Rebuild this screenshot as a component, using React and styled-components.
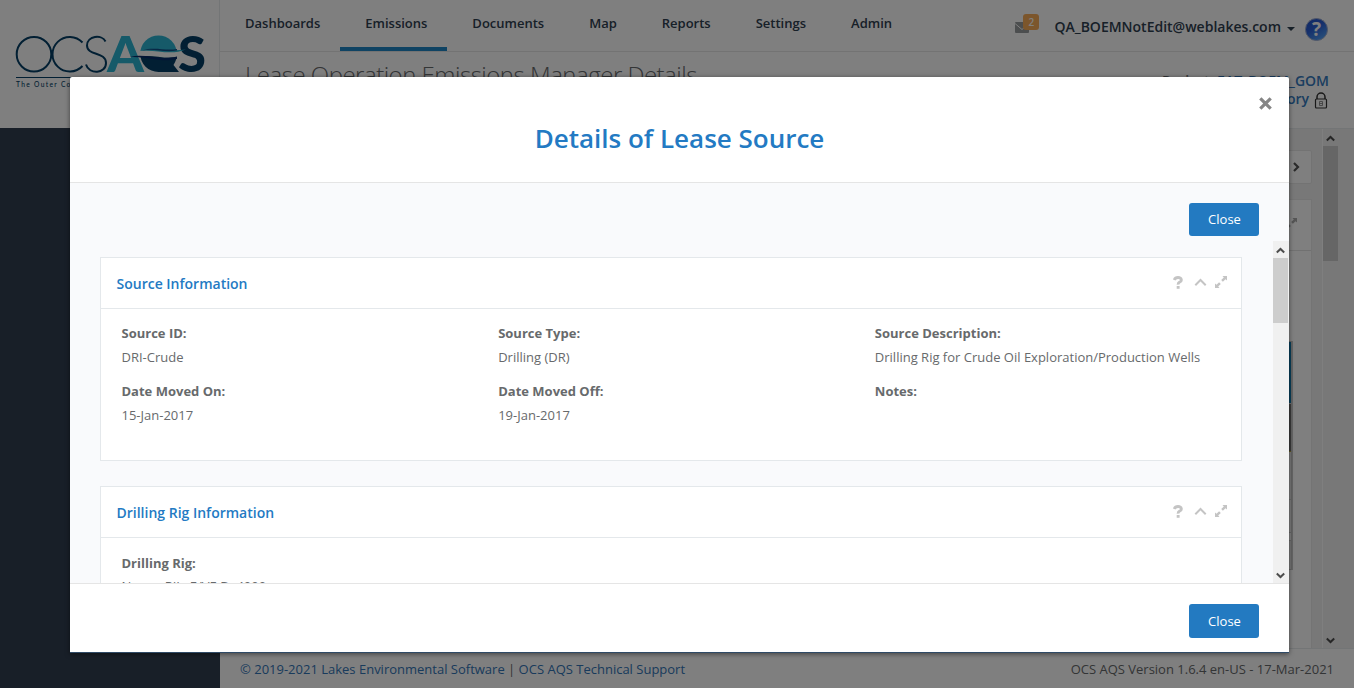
import React from 'react';
import styled, { createGlobalStyle } from 'styled-components';

const Global = createGlobalStyle`
  * { box-sizing: border-box; }
  html, body { margin: 0; padding: 0; overflow: hidden; }
  body { font-family: "Open Sans", "Noto Sans", sans-serif; font-size: 13px; color: #676a6c; }
`;

const Page = styled.div`
  width: 1354px;
  height: 688px;
  display: flex;
  background: #fff;
  overflow: hidden;
`;
const Sidebar = styled.aside`
  width: 220px;
  display: flex;
  flex-direction: column;
  background: #2f4050;
`;
const LogoBox = styled.div`
  height: 128px;
  padding: 33px 0 0 14px;
  background: #fff;
  border-right: 1px solid #e7eaec;
`;
const SideNav = styled.nav`
  flex: 1;
  background: #303f51;
`;
const Main = styled.div`
  flex: 1;
  min-width: 0;
  display: flex;
  flex-direction: column;
`;
const TopBar = styled.header`
  height: 52px;
  display: flex;
  justify-content: space-between;
  border-bottom: 1px solid #e7e7e7;
`;
const Menu = styled.nav`
  display: flex;
`;
const MenuItem = styled.a`
  height: 51px;
  padding: 13px 20px 0 25px;
  font-weight: 600;
  line-height: 20px;
  color: #2f4050;
  border-bottom: 4px solid ${p => (p.$active ? '#1f86c6' : 'transparent')};
`;
const UserArea = styled.div`
  display: flex;
  padding-right: 25px;
`;
const Mail = styled.div`
  display: flex;
  align-items: flex-start;
  padding-top: 14px;
  margin-right: 15px;
  svg { margin-top: 8px; }
`;
const Count = styled.span`
  width: 16px;
  height: 16px;
  margin-left: -6px;
  border-radius: 3px;
  background: #f8ac59;
  color: #fff;
  font-size: 10px;
  font-weight: 600;
  line-height: 17px;
  text-align: center;
  position: relative;
`;
const UserName = styled.span`
  padding-top: 17px;
  font-size: 14px;
  font-weight: 600;
  line-height: 20px;
  color: #2f4050;
`;
const Caret = styled.i`
  margin: 27px 10px 0 6px;
  height: 4px;
  border: 4px solid transparent;
  border-top-color: #2f4050;
  border-bottom: 0;
`;
const HelpIcon = styled.div`
  padding-top: 17px;
  height: 42px;
`;
const Heading = styled.div`
  height: 77px;
  display: flex;
  justify-content: space-between;
  padding: 0 25px;
  border-bottom: 1px solid #e7eaec;
`;
const PageTitle = styled.h2`
  margin: 7px 0 0;
  font-size: 24px;
  font-weight: 300;
  letter-spacing: -0.5px;
  line-height: 32px;
`;
const Project = styled.div`
  padding-top: 20px;
  font-size: 14px;
  font-weight: 600;
  line-height: 18px;
  text-align: right;
  a { color: #347ac0; }
`;
const ProjectLine = styled.div`
  display: flex;
  justify-content: flex-end;
  gap: 5px;
  padding-right: 1px;
  svg { margin-top: 2px; }
`;
const Content = styled.div`
  flex: 1;
  display: flex;
  background: #f1f1f1;
`;
const Panels = styled.div`
  flex: 1;
  padding: 21px 10px 0 25px;
  display: flex;
  flex-direction: column;
  gap: 15px;
`;
const PanelBar = styled.div`
  height: 34px;
  display: flex;
  align-items: center;
  justify-content: flex-end;
  padding: 0 11px 1px 0;
  background: #fff;
  border: 1px solid #e7e7e7;
  border-radius: 2px;
`;
const BackPanel = styled.div`
  flex: 1;
  background: #fff;
  border: 1px solid #e9e9e9;
  border-bottom: 0;
`;
const BackPanelHead = styled.div`
  height: 51px;
  display: flex;
  justify-content: flex-end;
  padding: 18px 14px 0 0;
  border-bottom: 1px solid #e2e2e2;
`;
const BackGrid = styled.div`
  margin: 90px 18px 0 20px;
  height: 229px;
  border: 1px solid #c8c8c8;
  border-right-width: 2px;
  display: flex;
  flex-direction: column;
`;
const BackRow = styled.div`
  height: ${p => p.$h}px;
  background: ${p => p.$bg};
  border-bottom: 1px solid ${p => p.$line};
`;
const Track = styled.div`
  width: ${p => p.$w}px;
  display: flex;
  flex-direction: column;
  align-items: flex-start;
  background: #f0f0f0;
  border-left: ${p => (p.$edge ? '1px solid #fff' : '0')};
`;
const Arrow = styled.div`
  width: 15px;
  height: 17px;
  padding-top: 1px;
  display: flex;
  align-items: center;
  justify-content: center;
`;
const Thumb = styled.div`
  width: 15px;
  height: ${p => p.$h}px;
  background: #cdcdcd;
`;
const Spacer = styled.div`
  flex: 1;
`;
const Footer = styled.footer`
  height: 40px;
  display: flex;
  justify-content: space-between;
  padding: 10px 20px 0 20px;
  border-top: 1px solid #e7eaec;
  background: #fff;
  line-height: 21px;
  a { color: #3376b8; }
`;
const Backdrop = styled.div`
  position: absolute;
  top: 0;
  left: 0;
  width: 1354px;
  height: 688px;
  padding: 77px 65px 0 70px;
  background: rgba(0, 0, 0, 0.5);
`;
const Dialog = styled.section`
  width: 1219px;
  height: 576px;
  display: flex;
  flex-direction: column;
  background: #fff;
  border-bottom: 1px solid #2f4a66;
  border-radius: 2px 2px 0 0;
  box-shadow: 0 1px 5px rgba(0, 0, 0, 0.5);
`;
const DialogHead = styled.div`
  height: 106px;
  display: grid;
  grid-template-columns: 1fr auto 1fr;
  border-bottom: 1px solid #e5e5e5;
`;
const DialogTitle = styled.h4`
  grid-column: 2;
  margin: 43px 0 0;
  font-size: 26px;
  font-weight: 600;
  line-height: 36px;
  color: #237ac3;
`;
const DismissButton = styled.button`
  justify-self: end;
  align-self: start;
  width: 13px;
  height: 13px;
  margin: 20px 17px 0 0;
  padding: 0;
  border: 0;
  background: none;
  display: flex;
`;
const DialogBody = styled.div`
  height: 400px;
  display: flex;
  flex-direction: column;
  background: #f9fafc;
`;
const Actions = styled.div`
  height: ${p => p.$h}px;
  padding: 20px 30px 0 0;
  display: flex;
  justify-content: flex-end;
  align-items: flex-start;
  border-top: ${p => (p.$line ? '1px solid #e5e5e5' : '0')};
`;
const Button = styled.button`
  width: 70px;
  height: ${p => p.$h}px;
  padding: 0 0 ${p => 34 - p.$h}px 1px;
  border: 0;
  border-radius: 3px;
  background: #237ac1;
  color: #fff;
  font: 13px "Open Sans", sans-serif;
`;
const ScrollPane = styled.div`
  height: 342px;
  display: flex;
  overflow: hidden;
`;
const Cards = styled.div`
  flex: 1;
  padding: 16px 31px 0 30px;
  display: flex;
  flex-direction: column;
  gap: 25px;
`;
const Card = styled.article`
  flex: none;
  height: 204px;
  background: #fff;
  border: 1px solid #e4e8eb;
`;
const CardHead = styled.div`
  height: 51px;
  display: flex;
  justify-content: space-between;
  padding: 0 14px 0 15.5px;
  border-bottom: 1px solid #e4e8eb;
`;
const CardTitle = styled.h5`
  margin: 15px 0 0;
  font-size: 14px;
  font-weight: 600;
  line-height: 22px;
  color: #237ac3;
`;
const Tools = styled.div`
  display: flex;
  gap: 8px;
  padding-top: 18px;
  svg { display: block; }
`;
const HelpMark = styled.svg`
  margin-right: 3px;
`;
const Fields = styled.dl`
  margin: 0;
  padding: ${p => (p.$tight ? 13 : 12)}px 5px 0;
  display: grid;
  grid-template-columns: repeat(3, 1fr);
`;
const Field = styled.div`
  height: 58px;
  padding-left: 15.5px;
  line-height: 24px;
  white-space: nowrap;
`;
const Label = styled.dt`
  font-weight: 700;
`;
const Value = styled.dd`
  margin: ${p => (p.$tight ? -1 : 0)}px 0 0;
`;

const Chevron = ({ down }) => (
  <svg width="9" height="7" viewBox="0 0 9 7">
    <path d={down ? 'M.8 1.5 4.5 5 8.2 1.5' : 'M.8 5.5 4.5 2 8.2 5.5'} fill="none" stroke="#4d4d4d" strokeWidth="2" />
  </svg>
);

const Expand = ({ color = '#c4c4c4' }) => (
  <svg width="12" height="12" viewBox="0 0 12 12" fill={color}>
    <path d="M7.500 0H12V4.500L10.500 3.200 7.900 5.800 6.200 4.100 8.800 1.500ZM0 7.500V12H4.500L3.200 10.500 5.800 7.900 4.100 6.200 1.500 8.800Z" />
  </svg>
);

const Logo = () => (
  <svg width="200" height="60" viewBox="14 33 200 60">
    <g fill="none" stroke="#043f66" strokeWidth="2">
      <circle cx="34" cy="54.3" r="17.3" />
      <path d="M82.500 42.500A17.300 17.300 0 1 0 82.500 66" />
      <path d="M105.500 41.500C102 34 87 35.500 87 45.500C87 56 106 51.500 106 63C106 74 89 75 86 64.500" />
    </g>
    <g fontFamily="Lato" fontSize="49" fontWeight="900">
      <text x="107" y="71.500" fill="#2cb4d2" textLength="37" lengthAdjust="spacingAndGlyphs">A</text>
      <text x="178" y="71.500" fill="#043f66" textLength="28" lengthAdjust="spacingAndGlyphs">S</text>
    </g>
    <path d="M140.200 53.700A18.300 18.300 0 0 1 176.800 53.700Z" fill="#2cb4d2" />
    <path d="M140.200 53.700A18.300 18.300 0 0 0 158.500 72H179L173.500 65Q176.800 60 176.800 53.700Z" fill="#043f66" />
    <path d="M138 51.500C152 47 163 53 180 49.500V56C165 61 152 53 138 57.500Z" fill="#fff" />
    <path d="M140 51C153 46 165 52 186 49.500C170 56 156 49 140 51Z" fill="#2cb4d2" />
    <path d="M142 50.500C154 46.500 165 51 177 49V50.500C164 53 154 48 142 50.500Z" fill="#10508a" />
    <path d="M130 57C145 53 158 61 177 56.500V59C160 63 148 56 130 57Z" fill="#062a6a" />
    <path d="M16 77.500H205" stroke="#043f66" />
    <text x="16" y="86.500" fontFamily="Lato" fontWeight="500" fontSize="6.700" letterSpacing="1.300" fill="#043f66">The Outer Continental Shelf</text>
  </svg>
);

const CardTools = () => (
  <Tools>
    <HelpMark width="10" height="13" viewBox="0 0 10 13" fill="none" stroke="#c4c4c4">
      <path d="M1.200 4Q2 1.500 5 1.500T8.400 3.900Q8.400 5.200 6.700 6.100T5.100 8.700" strokeWidth="2.800" />
      <path d="M3.700 11.400H6.600" strokeWidth="2.800" />
    </HelpMark>
    <svg width="13" height="13" viewBox="0 0 13 13">
      <path d="M1.300 9.200 6.500 4 11.700 9.200" fill="none" stroke="#c4c4c4" strokeWidth="2" />
    </svg>
    <Expand />
  </Tools>
);

const InfoCard = ({ title, fields, tight }) => (
  <Card>
    <CardHead>
      <CardTitle>{title}</CardTitle>
      <CardTools />
    </CardHead>
    <Fields $tight={tight}>
      {fields.map(([label, value]) => (
        <Field key={label}>
          <Label>{label}</Label>
          <Value $tight={tight}>{value}</Value>
        </Field>
      ))}
    </Fields>
  </Card>
);

const menu = ['Dashboards', 'Emissions', 'Documents', 'Map', 'Reports', 'Settings', 'Admin'];
const source = [
  ['Source ID:', 'DRI-Crude'],
  ['Source Type:', 'Drilling (DR)'],
  ['Source Description:', 'Drilling Rig for Crude Oil Exploration/Production Wells'],
  ['Date Moved On:', '15-Jan-2017'],
  ['Date Moved Off:', '19-Jan-2017'],
  ['Notes:', ''],
];
const rig = [['Drilling Rig:', 'Name: RIL, E/VE D: 4000']];

export default function App() {
  return (
    <>
      <Global />
      <Page>
        <Sidebar>
          <LogoBox><Logo /></LogoBox>
          <SideNav />
        </Sidebar>
        <Main>
          <TopBar>
            <Menu>
              {menu.map(name => <MenuItem key={name} $active={name === 'Emissions'}>{name}</MenuItem>)}
            </Menu>
            <UserArea>
              <Mail>
                <svg width="14" height="11" viewBox="0 0 14 11">
                  <rect width="14" height="11" rx="1" fill="#999c9e" />
                  <path d="M0 1.500 7 7.500 14 1.500" fill="none" stroke="#fff" />
                </svg>
                <Count>2</Count>
              </Mail>
              <UserName>QA_BOEMNotEdit@weblakes.com</UserName>
              <Caret />
              <HelpIcon>
                <svg width="24" height="24" viewBox="0 0 24 24">
                  <defs>
                    <linearGradient id="ball" x1="0" y1="0" x2="0.600" y2="1">
                      <stop offset="0" stopColor="#2453c8" />
                      <stop offset="0.500" stopColor="#2a60d8" />
                      <stop offset="1" stopColor="#4f9cf4" />
                    </linearGradient>
                  </defs>
                  <circle cx="11.500" cy="12.500" r="11" fill="url(#ball)" stroke="#a3afd0" />
                  <text x="11.500" y="19" textAnchor="middle" fontFamily="Open Sans" fontSize="19" fontWeight="700" fill="#fff">?</text>
                </svg>
              </HelpIcon>
            </UserArea>
          </TopBar>
          <Heading>
            <PageTitle>Lease Operation Emissions Manager Details</PageTitle>
            <Project>
              <div>Project: <a>EAT_BOEM_GOM</a></div>
              <ProjectLine>
                <a>Inventory</a>
                <svg width="14" height="17" viewBox="0 0 14 17" fill="none" stroke="#333">
                  <path d="M3 7V5a4 4 0 0 1 8 0V7" strokeWidth="1.500" />
                  <rect x="1.500" y="7" width="11" height="9" rx="1" strokeWidth="1.200" />
                  <path d="M5.500 9.500h3v4h-3zM5.500 11.500h3" stroke="#777" strokeWidth=".8" />
                </svg>
              </ProjectLine>
            </Project>
          </Heading>
          <Content>
            <Panels>
              <PanelBar>
                <svg width="8" height="10" viewBox="0 0 8 10"><path d="M2 1 6 5 2 9" fill="none" stroke="#555" strokeWidth="2.200" /></svg>
              </PanelBar>
              <BackPanel>
                <BackPanelHead><Expand color="#aaa" /></BackPanelHead>
                <BackGrid>
                  <BackRow $h={62} $bg="#0f7fb5" $line="#ddd" />
                  <BackRow $h={48} $bg="#777" $line="#c2b23c" />
                  <BackRow $h={48} $bg="#f4f4f4" $line="#d8d8d8" />
                  <BackRow $h={33} $bg="#f8f8f8" $line="#d0d0d0" />
                  <BackRow $h={8} $bg="#fff" $line="#d0d0d0" />
                  <BackRow $h={28} $bg="#ececec" $line="#ececec" />
                </BackGrid>
              </BackPanel>
            </Panels>
            <Track $w={32} $edge>
              <Arrow><Chevron /></Arrow>
              <Thumb $h={115} />
              <Spacer />
              <Arrow><Chevron down /></Arrow>
            </Track>
          </Content>
          <Footer>
            <span><a>© 2019-2021 Lakes Environmental Software</a> | <a>OCS AQS Technical Support</a></span>
            <span>OCS AQS Version 1.6.4 en-US - 17-Mar-2021</span>
          </Footer>
        </Main>
      </Page>
      <Backdrop>
        <Dialog>
          <DialogHead>
            <DialogTitle>Details of Lease Source</DialogTitle>
            <DismissButton aria-label="Dismiss">
              <svg width="13" height="13" viewBox="0 0 13 13"><path d="M1.300 1.300 11.700 11.700M11.700 1.300 1.300 11.700" stroke="#858585" strokeWidth="3.200" /></svg>
            </DismissButton>
          </DialogHead>
          <DialogBody>
            <Actions $h={58}><Button $h={33}>Close</Button></Actions>
            <ScrollPane>
              <Cards>
                <InfoCard title="Source Information" fields={source} />
                <InfoCard title="Drilling Rig Information" fields={rig} tight />
              </Cards>
              <Track $w={16}>
                <Arrow><Chevron /></Arrow>
                <Thumb $h={65} />
                <Spacer />
                <Arrow><Chevron down /></Arrow>
              </Track>
            </ScrollPane>
          </DialogBody>
          <Actions $h={69} $line><Button $h={34}>Close</Button></Actions>
        </Dialog>
      </Backdrop>
    </>
  );
}
